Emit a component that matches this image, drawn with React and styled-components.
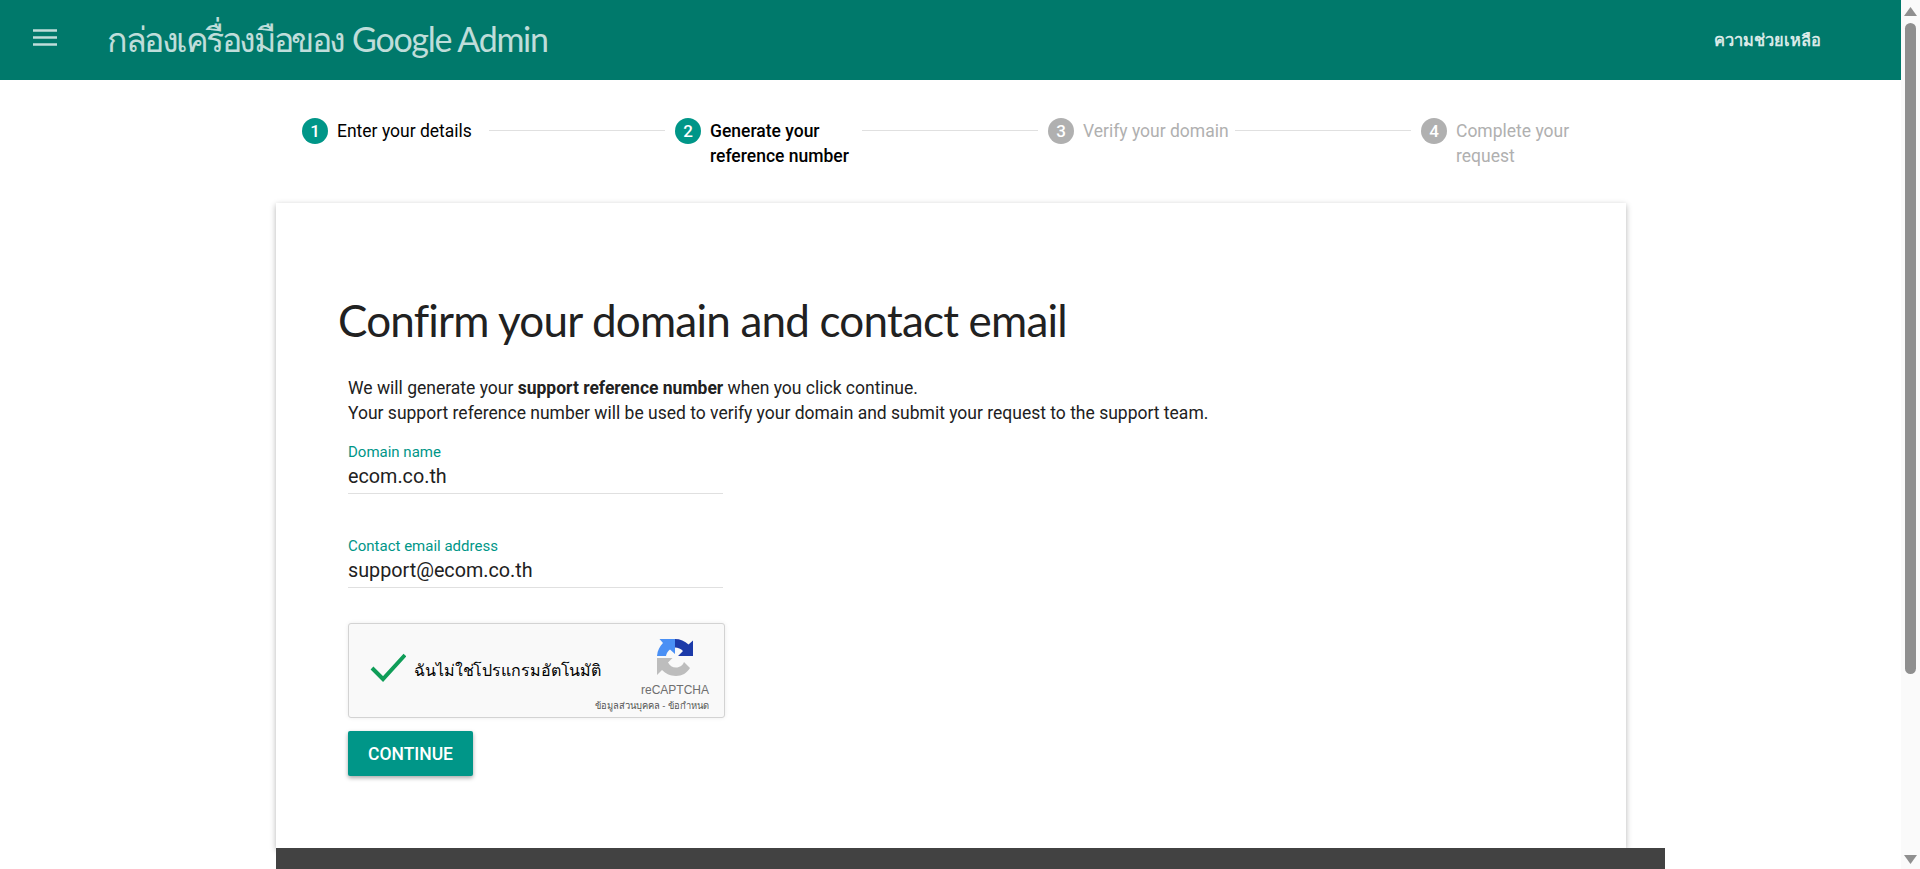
import React from "react";
import styled, { createGlobalStyle } from "styled-components";

const Global = createGlobalStyle`
  html, body {
    margin: 0;
    padding: 0;
    height: 100%;
    overflow: hidden;
    background: #fff;
    font-family: Roboto, "Noto Sans", sans-serif;
  }
`;

const Frame = styled.div`
  display: flex;
  height: 100vh;
`;

const Page = styled.div`
  flex: 1;
  min-width: 0;
  overflow: hidden;
`;

const ScrollBar = styled.div`
  width: 19px;
  flex: none;
  display: flex;
  flex-direction: column;
  align-items: center;
  background: #fafafa;
`;

const ScrollArrow = styled.svg`
  width: 13px;
  height: 9px;
  flex: none;
  margin: ${(p) => (p.$down ? "auto 0 5px" : "7px 0 7px")};
`;

const ScrollThumb = styled.div`
  width: 11px;
  height: 651px;
  border-radius: 6px;
  background: #8f8f8f;
`;

const Header = styled.header`
  height: 80px;
  background: #00796b;
  display: flex;
  align-items: center;
  padding: 0 80px 0 33px;
  color: rgba(255, 255, 255, 0.75);
`;

const MenuIcon = styled.svg`
  width: 24px;
  height: 17px;
  margin-bottom: 6px;
  flex: none;
`;

const Title = styled.h1`
  margin: 0 0 0 50px;
  font-family: Lato, sans-serif;
  font-size: 34px;
  font-weight: 400;
  letter-spacing: -1.3px;
  flex: 1;
  white-space: nowrap;
`;

const TitleThai = styled.span`
  letter-spacing: -2.45px;
  margin-right: 1px;
`;

const Help = styled.a`
  font-size: 16.4px;
  font-weight: 700;
  color: rgba(255, 255, 255, 0.85);
`;

const Stepper = styled.div`
  width: 1118px;
  margin-left: 302px;
  padding-top: 38px;
  height: 123px;
  box-sizing: border-box;
  display: grid;
  grid-template-columns: repeat(3, 373px) 1fr;
`;

const Step = styled.div`
  display: flex;
  align-items: flex-start;
  font-size: 17.5px;
  line-height: 26px;
  color: ${(p) => (p.$state === "todo" ? "#b0b0b0" : "#000")};
  font-weight: ${(p) => (p.$state === "current" ? 500 : 400)};
`;

const StepNumber = styled.span`
  width: 26px;
  height: 26px;
  flex: none;
  border-radius: 50%;
  background: ${(p) => (p.$state === "todo" ? "#b0b0b0" : "#009688")};
  color: #fff;
  font-size: 17px;
  font-weight: 500;
  text-align: center;
  margin-right: 9px;
`;

const StepLabel = styled.span`
  width: 152px;
  flex: none;
  margin-top: 1px;
  white-space: nowrap;
  line-height: 25px;
`;

const StepLine = styled.span`
  flex: 1;
  height: 1px;
  background: #e0e0e0;
  margin: 12px 10px 0 0;
`;

const Card = styled.main`
  width: 1350px;
  height: 645px;
  margin-left: 276px;
  box-sizing: border-box;
  padding: 92px 62px 0 62px;
  background: #fff;
  box-shadow: 0 2px 6px rgba(0, 0, 0, 0.3);
`;

const Heading = styled.h2`
  margin: 0 0 31px 0;
  font-family: Lato, sans-serif;
  font-size: 44px;
  line-height: 50px;
  font-weight: 400;
  letter-spacing: -0.8px;
  color: #212121;
`;

const Body = styled.div`
  padding-left: 10px;
`;

const Intro = styled.p`
  margin: 0 0 16px;
  font-size: 17.5px;
  line-height: 25px;
  color: #212121;
  b {
    font-weight: 700;
  }
`;

const Field = styled.div`
  width: 375px;
  height: 51px;
  margin-bottom: 42px;
  border-bottom: 1px solid #e0e0e0;
`;

const FieldLabel = styled.label`
  display: block;
  font-size: 15px;
  line-height: 20px;
  color: #009688;
`;

const FieldValue = styled.div`
  font-size: 19.75px;
  line-height: 30px;
  color: #212121;
`;

const Captcha = styled.div`
  width: 377px;
  height: 95px;
  box-sizing: border-box;
  margin-top: -7px;
  display: flex;
  align-items: center;
  background: #f9f9f9;
  border: 1px solid #d3d3d3;
  border-radius: 3px;
  box-shadow: 0 0 4px rgba(0, 0, 0, 0.08);
  padding: 0 15px 0 21px;
`;

const CaptchaCheck = styled.svg`
  width: 36px;
  height: 30px;
  flex: none;
  margin: 0 8px 6px 0;
`;

const CaptchaText = styled.span`
  flex: 1 1 0;
  min-width: 0;
  font-size: 16px;
  letter-spacing: -0.1px;
  color: #000;
  white-space: nowrap;
`;

const CaptchaBrand = styled.div`
  width: 120px;
  flex: none;
  margin-top: 10px;
  display: flex;
  flex-direction: column;
  align-items: flex-end;
  font-family: "Liberation Sans", Roboto, sans-serif;
`;

const CaptchaLogo = styled.svg`
  width: 38px;
  height: 38px;
  margin-right: 14px;
`;

const CaptchaName = styled.div`
  font-size: 12px;
  line-height: 16px;
  margin-top: 5px;
  color: #6f6f6f;
`;

const CaptchaLinks = styled.div`
  font-size: 9.4px;
  line-height: 14px;
  margin-top: 1px;
  color: #555;
  white-space: nowrap;
`;

const Continue = styled.button`
  display: block;
  width: 125px;
  height: 45px;
  margin-top: 13px;
  border: 0;
  border-radius: 2px;
  background: #009688;
  color: #fff;
  font-family: Roboto, sans-serif;
  font-size: 17.5px;
  font-weight: 500;
  box-shadow: 0 2px 4px rgba(0, 0, 0, 0.35);
`;

const Footer = styled.footer`
  width: 1389px;
  height: 268px;
  margin-left: 276px;
  background: #424242;
`;

const steps = [
  { n: 1, label: ["Enter your details"], state: "done", line: true },
  { n: 2, label: ["Generate your", "reference number"], state: "current", line: true },
  { n: 3, label: ["Verify your domain"], state: "todo", line: true },
  { n: 4, label: ["Complete your", "request"], state: "todo", line: false },
];

export default function App() {
  return (
    <Frame>
      <Global />
      <Page>
        <Header>
          <MenuIcon viewBox="0 0 24 17">
            <path d="M0 1.5h24M0 8.5h24M0 15.5h24" stroke="rgba(255,255,255,0.75)" strokeWidth="2.6" />
          </MenuIcon>
          <Title>
            <TitleThai>กล่องเครื่องมือของ</TitleThai> Google Admin
          </Title>
          <Help>ความช่วยเหลือ</Help>
        </Header>

        <Stepper>
          {steps.map((s) => (
            <Step key={s.n} $state={s.state}>
              <StepNumber $state={s.state}>{s.n}</StepNumber>
              <StepLabel>
                {s.label.map((t) => (
                  <div key={t}>{t}</div>
                ))}
              </StepLabel>
              {s.line && <StepLine />}
            </Step>
          ))}
        </Stepper>

        <Card>
          <Heading>Confirm your domain and contact email</Heading>
          <Body>
            <Intro>
              We will generate your <b>support reference number</b> when you click continue.
              <br />
              Your support reference number will be used to verify your domain and submit your request to the support team.
            </Intro>
            <Field>
              <FieldLabel>Domain name</FieldLabel>
              <FieldValue>ecom.co.th</FieldValue>
            </Field>
            <Field>
              <FieldLabel>Contact email address</FieldLabel>
              <FieldValue>support@ecom.co.th</FieldValue>
            </Field>
            <Captcha>
              <CaptchaCheck viewBox="0 0 36 30">
                <path d="M2 15l11 11L35 2" fill="none" stroke="#0f9d58" strokeWidth="4" />
              </CaptchaCheck>
              <CaptchaText>ฉันไม่ใช่โปรแกรมอัตโนมัติ</CaptchaText>
              <CaptchaBrand>
                <CaptchaLogo viewBox="0 0 38 38">
                  <path d="M0 17C.5 11 3 7 6 4L2.500 0H18v15l-5-4.500C11 12 9.500 14 9 17z" fill="#4a90f5" />
                  <path d="M18 0c5 0 10 2 13.500 5.500L36 1.500V17H21l5-5c-2-2-5-3.500-8-3.500z" fill="#1c3aa9" />
                  <path d="M0 19h15.500L11 23.500c1.500 3 4.500 5 8 5 4 0 7-2.500 8-5.500l6 6c-3 5-8 8-14 8s-11-3-14-6l-5 5z" fill="#bdbdbd" />
                </CaptchaLogo>
                <CaptchaName>reCAPTCHA</CaptchaName>
                <CaptchaLinks>ข้อมูลส่วนบุคคล - ข้อกำหนด</CaptchaLinks>
              </CaptchaBrand>
            </Captcha>
            <Continue>CONTINUE</Continue>
          </Body>
        </Card>
        <Footer />
      </Page>
      <ScrollBar>
        <ScrollArrow viewBox="0 0 13 9">
          <path d="M6.500 0L13 9H0z" fill="#8f8f8f" />
        </ScrollArrow>
        <ScrollThumb />
        <ScrollArrow $down viewBox="0 0 13 9">
          <path d="M0 0h13L6.500 9z" fill="#8f8f8f" />
        </ScrollArrow>
      </ScrollBar>
    </Frame>
  );
}
